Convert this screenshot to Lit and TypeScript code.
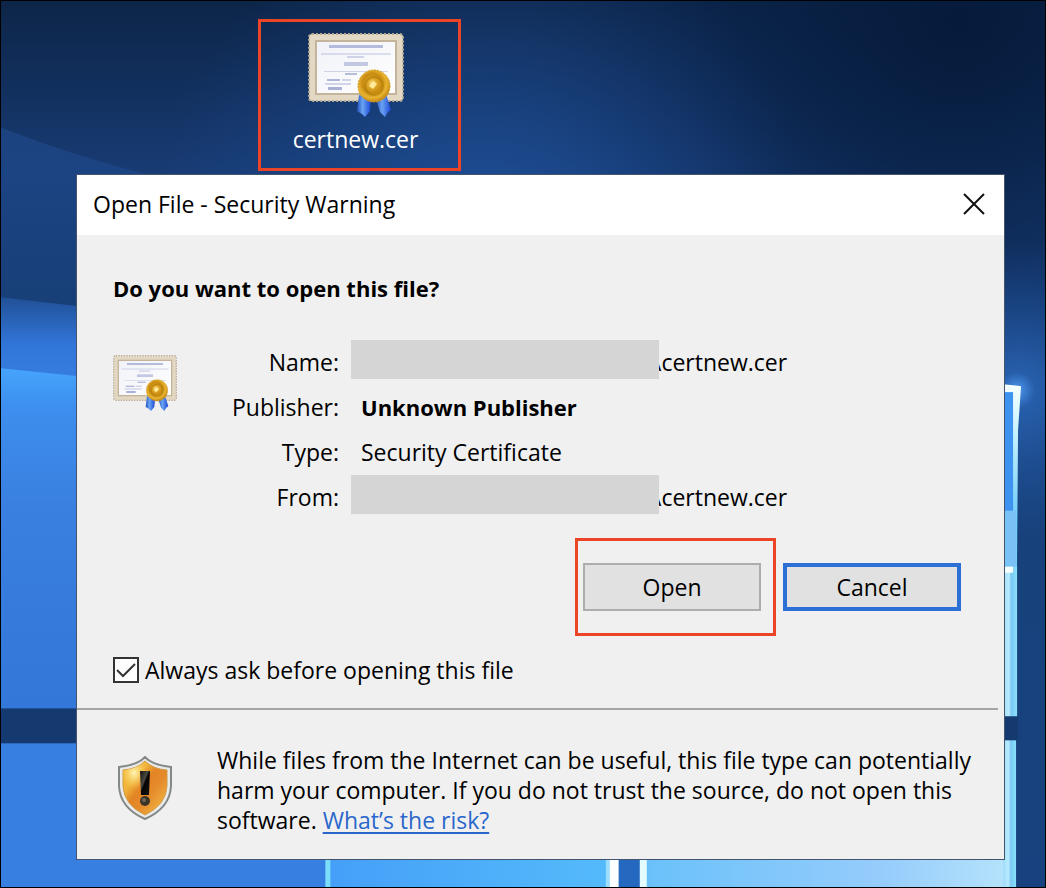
import { LitElement, html, css, svg } from "lit";
import { customElement, property, state } from "lit/decorators.js";

@customElement("desktop-wallpaper")
class DesktopWallpaper extends LitElement {
  static styles = css`
    :host { display: block; }
    .art { display: block; width: 100%; height: 100%; }
  `;

  render() {
    return html`
      <svg class="art" viewBox="0 0 1046 888" preserveAspectRatio="none" aria-hidden="true">
        <defs>
          <linearGradient id="sky" x1="0" y1="0" x2="0" y2="1">
            <stop offset="0" stop-color="#0d2548" />
            <stop offset=".1" stop-color="#12305e" />
            <stop offset=".2" stop-color="#183c75" />
            <stop offset=".4" stop-color="#184179" />
            <stop offset="1" stop-color="#17427f" />
          </linearGradient>
          <radialGradient id="dark" gradientUnits="userSpaceOnUse" cx="960" cy="20" r="430">
            <stop offset="0" stop-color="#061b3b" />
            <stop offset=".35" stop-color="#071e41" stop-opacity=".75" />
            <stop offset="1" stop-color="#0a2450" stop-opacity="0" />
          </radialGradient>
          <radialGradient id="glow" gradientUnits="userSpaceOnUse" cx="480" cy="235" r="330">
            <stop offset="0" stop-color="#2055a2" stop-opacity=".75" />
            <stop offset="1" stop-color="#1d4c94" stop-opacity="0" />
          </radialGradient>
          <linearGradient id="left" x1="0" y1="0" x2="0" y2="1">
            <stop offset="0" stop-color="#215096" />
            <stop offset=".45" stop-color="#3175d8" />
            <stop offset="1" stop-color="#3a82e3" />
          </linearGradient>
          <linearGradient id="beam" x1="0" y1="0" x2="0" y2="1">
            <stop offset="0" stop-color="#46a4fb" />
            <stop offset=".12" stop-color="#3d8eee" />
            <stop offset=".4" stop-color="#3a80e0" />
            <stop offset="1" stop-color="#3377d9" />
          </linearGradient>
          <linearGradient id="ray" x1="0" y1="0" x2="0" y2="1">
            <stop offset="0" stop-color="#2859a5" stop-opacity=".4" />
            <stop offset="1" stop-color="#2055a2" stop-opacity="0" />
          </linearGradient>
          <radialGradient id="flare" gradientUnits="userSpaceOnUse" cx="1018" cy="390" r="150">
            <stop offset="0" stop-color="#4f9af2" />
            <stop offset=".12" stop-color="#2b66b8" stop-opacity=".8" />
            <stop offset="1" stop-color="#1c4f9a" stop-opacity="0" />
          </radialGradient>
          <linearGradient id="paneA" x1="0" y1="0" x2="1" y2="0">
            <stop offset="0" stop-color="#459ff8" />
            <stop offset="1" stop-color="#55bbfb" />
          </linearGradient>
          <linearGradient id="paneB" x1="0" y1="0" x2="1" y2="0">
            <stop offset="0" stop-color="#69c1fa" />
            <stop offset=".65" stop-color="#95ccfc" />
            <stop offset="1" stop-color="#b5e3fb" />
          </linearGradient>
          <linearGradient id="edge" x1="0" y1="0" x2="1" y2="0">
            <stop offset="0" stop-color="#9fdcfb" />
            <stop offset=".4" stop-color="#b9ebfd" />
            <stop offset=".6" stop-color="#7cc9f5" />
            <stop offset="1" stop-color="#88e2fb" />
          </linearGradient>
          <linearGradient id="frame" x1="0" y1="0" x2="0" y2="1">
            <stop offset="0" stop-color="#f6ffff" />
            <stop offset=".15" stop-color="#c5f2ff" />
            <stop offset=".4" stop-color="#70cdf8" />
            <stop offset="1" stop-color="#70cdf8" />
          </linearGradient>
        </defs>
        <rect width="1046" height="888" fill="url(#sky)" />
        <rect width="1046" height="888" fill="url(#dark)" />
        <rect width="1046" height="450" fill="url(#glow)" />
        <path d="M0 127Q80 158 170 180H77V300H0Z" fill="url(#ray)" />
        <path d="M0 297L78 306V400H0Z" fill="url(#left)" />
        <path d="M0 368L78 376V710H0Z" fill="url(#beam)" />
        <rect y="709" width="78" height="35" fill="#153a70" />
        <rect y="744" width="330" height="144" fill="#377fe1" />
        <rect x="327" y="850" width="288" height="38" fill="url(#paneA)" />
        <rect x="325" y="850" width="5" height="38" fill="#7cdcfc" />
        <rect x="606" y="850" width="6" height="38" fill="#9cdcfd" />
        <rect x="610" y="850" width="9" height="38" fill="#fbffff" />
        <rect x="619" y="850" width="22" height="38" fill="#2468c0" />
        <rect x="642" y="850" width="368" height="38" fill="url(#paneB)" />
        <rect x="640" y="850" width="7" height="38" fill="#e4fbff" />
        <rect x="900" y="220" width="146" height="340" fill="url(#flare)" />
        <path d="M1004 332L1004 385H1022L1019 430L1018 560V717H1004Z" fill="none" />
        <path d="M1004 332" fill="none" />
        <path d="M1004 384L1022 386L1019 430L1018 560V717H1004Z" fill="url(#frame)" />
        <rect x="1004" y="392" width="10" height="119" fill="#3f93f0" />
        <rect x="1004" y="511" width="13" height="60" fill="#79c2f5" />
        <rect x="1004" y="567" width="14" height="150" fill="url(#edge)" />
        <rect x="1004" y="567" width="10" height="6" fill="#f5ffff" />
        <rect x="1004" y="717" width="15" height="24" fill="#143a70" />
        <rect x="1004" y="741" width="13" height="147" fill="url(#edge)" />
      </svg>
    `;
  }
}

@customElement("certificate-icon")
class CertificateIcon extends LitElement {
  static styles = css`
    :host { display: block; }
    .art { display: block; width: 100%; height: auto; }
  `;

  render() {
    return html`
      <svg class="art" viewBox="0 0 96 85" aria-hidden="true">
        <defs>
          <linearGradient id="paper" x1="0" y1="0" x2="1" y2="1">
            <stop offset="0" stop-color="#f1f2f8" />
            <stop offset="1" stop-color="#ffffff" />
          </linearGradient>
          <radialGradient id="gold" cx=".45" cy=".42" r=".6">
            <stop offset="0" stop-color="#ffe78a" />
            <stop offset=".25" stop-color="#dda526" />
            <stop offset=".5" stop-color="#c78a10" />
            <stop offset=".75" stop-color="#e9b430" />
            <stop offset="1" stop-color="#bd8210" />
          </radialGradient>
          <linearGradient id="ribbon" x1="0" y1="0" x2="1" y2="0">
            <stop offset="0" stop-color="#2450c0" />
            <stop offset=".4" stop-color="#6aa4f2" />
            <stop offset="1" stop-color="#1c45d8" />
          </linearGradient>
        </defs>
        <rect x="1" y="1" width="94" height="67" rx="3" fill="#e3d8c4" />
        <rect x="1" y="1" width="94" height="67" rx="3" fill="none" stroke="#b8aa92" stroke-width="2" stroke-dasharray="2 2" />
        <rect x="7" y="7" width="82" height="55" fill="#c4b49b" />
        <rect x="9" y="9" width="78" height="51" fill="url(#paper)" />
        <g fill="#7480bd">
          <rect x="21" y="12" width="54" height="3" opacity=".5" />
          <rect x="13" y="20" width="70" height="2" opacity=".22" />
          <rect x="39" y="23" width="17" height="2" opacity=".3" />
          <rect x="36" y="29" width="24" height="4" opacity=".4" />
          <rect x="16" y="38" width="64" height="1" opacity=".3" />
          <rect x="37" y="40" width="12" height="2" opacity=".5" />
          <rect x="19" y="46" width="13" height="2" opacity=".55" />
          <rect x="34" y="46" width="9" height="2" opacity=".3" />
          <rect x="17" y="50" width="26" height="2" opacity=".3" />
          <rect x="20" y="54" width="14" height="3" opacity=".6" />
        </g>
        <path d="M51 62L49 78L54 81L57 84L62 78L63 66Z" fill="url(#ribbon)" />
        <path d="M68 66L72 79L77 84L80 79L83 77L78 61Z" fill="url(#ribbon)" />
        <circle cx="66" cy="53" r="16" fill="url(#gold)" stroke="#cf9a22" stroke-dasharray="2 1" />
        <circle cx="66" cy="53" r="9" fill="none" stroke="#a87508" stroke-width="2" opacity=".5" />
        <path d="M61 53L65 48L69 51L65 56Z" fill="#ffe99a" />
      </svg>
    `;
  }
}

@customElement("shield-icon")
class ShieldIcon extends LitElement {
  static styles = css`
    :host { display: block; }
    .art { display: block; width: 100%; height: auto; }
  `;

  render() {
    return html`
      <svg class="art" viewBox="0 0 54 64" aria-hidden="true">
        <defs>
          <linearGradient id="amber" x1="0" y1="0" x2="1" y2="1">
            <stop offset="0" stop-color="#f3bb2e" />
            <stop offset=".3" stop-color="#f0b43c" />
            <stop offset=".45" stop-color="#e38425" />
            <stop offset=".62" stop-color="#e58b2c" />
            <stop offset="1" stop-color="#f6c649" />
          </linearGradient>
          <radialGradient id="shine" cx=".25" cy=".22" r=".3">
            <stop offset="0" stop-color="#fff6b8" />
            <stop offset="1" stop-color="#fbd25c" stop-opacity="0" />
          </radialGradient>
          <linearGradient id="ink" x1="0" y1="0" x2="1" y2="1">
            <stop offset="0" stop-color="#111111" />
            <stop offset=".4" stop-color="#4a4a42" />
            <stop offset=".5" stop-color="#050505" />
            <stop offset="1" stop-color="#151515" />
          </linearGradient>
        </defs>
        <path d="M27 1Q34 9 53 11V30Q52 52 27 63Q2 52 1 30V11Q20 9 27 1Z" fill="#e9ebeb" stroke="#858888" stroke-width="2" />
        <path d="M27 5Q35 13 49 14V30Q48 49 27 59Q6 49 5 30V14Q19 13 27 5Z" fill="url(#amber)" stroke="#cf9a45" />
        <path d="M27 5Q35 13 49 14V30Q48 49 27 59Q6 49 5 30V14Q19 13 27 5Z" fill="url(#shine)" />
        <path d="M22 15H32L31 39H23Z" fill="url(#ink)" />
        <circle cx="27" cy="45" r="5" fill="#3b3427" />
        <circle cx="26" cy="44" r="2" fill="#6d6860" />
      </svg>
    `;
  }
}

@customElement("security-dialog")
class SecurityDialog extends LitElement {
  @property() file = "certnew.cer";
  @state() private ask = true;

  static styles = css`
    :host { display: block; }
    * { box-sizing: border-box; }
    .window {
      background: #f0f0f0;
      border: 1px solid #44546a;
      color: #000;
      font-size: 23px;
      line-height: 30px;
    }
    .titlebar {
      display: flex;
      align-items: center;
      justify-content: space-between;
      height: 60px;
      padding: 0 16px 2px;
      background: #fff;
    }
    .title { margin: 0; font-size: 23px; font-weight: 400; }
    .close {
      display: grid;
      place-items: center;
      width: 28px;
      height: 28px;
      padding: 0;
      border: 0;
      background: none;
    }
    .cross { width: 22px; height: 22px; }
    .body { padding: 38px 36px 23px; }
    .question { margin: 0; font-size: 22px; font-weight: 700; }
    .details { display: flex; margin-top: 37px; }
    .fileicon { flex: none; width: 64px; margin-top: 15px; }
    .facts {
      flex: 1;
      display: grid;
      grid-template-columns: 162px 1fr;
      grid-auto-rows: 45px;
      column-gap: 12px;
      margin: 0;
    }
    .term { text-align: right; line-height: 45px; }
    .value { margin: 0; padding-left: 10px; line-height: 45px; }
    .path { display: flex; padding-left: 0; }
    .mask { position: relative; width: 308px; height: 39px; background: #d5d5d5; }
    .name { margin-left: -6px; }
    .strong { font-size: 22px; font-weight: 700; }
    .actions { display: flex; justify-content: flex-end; align-items: center; gap: 7px; margin: 18px 7px 0 0; }
    .mark { padding: 22px 12px 22px 5px; border: 3px solid #ec4427; }
    .btn {
      display: block;
      width: 178px;
      height: 48px;
      padding: 0;
      border: 2px solid #adadad;
      background: #e1e1e1;
      color: #000;
      font: inherit;
    }
    .default { border: 4px solid #2c70d6; }
    .ask { display: flex; align-items: center; gap: 6px; margin-top: 19px; }
    .tick { display: grid; width: 26px; height: 26px; }
    .box, .check { grid-area: 1 / 1; width: 26px; height: 26px; margin: 0; }
    .box { appearance: none; border: 2px solid #333; background: #fff; }
    .check { pointer-events: none; }
    .rule { height: 2px; margin: 0 6px 0 0; border: 0; background: #a5a5a5; }
    .footer { display: flex; gap: 45px; padding: 35px 24px 24px 41px; }
    .shield { flex: none; width: 54px; margin-top: 11px; }
    .advice { margin: 0; }
    .link { color: #2a67cc; text-decoration-thickness: 2px; text-underline-offset: 3px; }
  `;

  private path() {
    return html`<dd class="value path"><span class="mask"></span><span class="name">\\${this.file}</span></dd>`;
  }

  render() {
    return html`
      <section class="window" role="dialog" aria-labelledby="title">
        <header class="titlebar">
          <h1 class="title" id="title">Open File - Security Warning</h1>
          <button class="close" aria-label="Close">
            <svg class="cross" viewBox="0 0 22 22" fill="none" stroke="#111" stroke-width="2">
              <path d="M1 1L21 21M21 1L1 21" />
            </svg>
          </button>
        </header>
        <div class="body">
          <h2 class="question">Do you want to open this file?</h2>
          <div class="details">
            <certificate-icon class="fileicon"></certificate-icon>
            <dl class="facts">
              <dt class="term">Name:</dt>
              ${this.path()}
              <dt class="term">Publisher:</dt>
              <dd class="value strong">Unknown Publisher</dd>
              <dt class="term">Type:</dt>
              <dd class="value">Security Certificate</dd>
              <dt class="term">From:</dt>
              ${this.path()}
            </dl>
          </div>
          <div class="actions">
            <div class="mark"><button class="btn">Open</button></div>
            <button class="btn default">Cancel</button>
          </div>
          <label class="ask">
            <span class="tick">
              <input class="box" type="checkbox" .checked=${this.ask}
                @change=${(e: Event) => (this.ask = (e.target as HTMLInputElement).checked)} />
              <svg class="check" viewBox="0 0 26 26" fill="none" stroke="#333" stroke-width="2">
                ${this.ask ? svg`<path d="M4 13L10 19L22 7" />` : null}
              </svg>
            </span>
            Always ask before opening this file
          </label>
        </div>
        <hr class="rule" />
        <footer class="footer">
          <shield-icon class="shield"></shield-icon>
          <p class="advice">
            While files from the Internet can be useful, this file type can potentially harm your
            computer. If you do not trust the source, do not open this software.
            <a class="link" href="#risk">What’s the risk?</a>
          </p>
        </footer>
      </section>
    `;
  }
}

@customElement("app-root")
class AppRoot extends LitElement {
  static styles = css`
    :host { display: block; font-family: "Open Sans", "Noto Sans", sans-serif; }
    * { box-sizing: border-box; }
    .desktop {
      position: relative;
      min-height: 100vh;
      padding: 18px 40px 27px 75px;
      border: 1px solid #000;
      overflow: hidden;
    }
    .wallpaper { position: absolute; inset: 0; }
    .content { position: relative; }
    .shortcut {
      display: flex;
      flex-direction: column;
      align-items: center;
      gap: 6px;
      width: 203px;
      height: 152px;
      margin: 0 0 3px 182px;
      padding: 11px 8px 0 0;
      border: 3px solid #ec4427;
      color: #fff;
      font-size: 23px;
      line-height: 30px;
    }
    .icon { width: 96px; }
  `;

  render() {
    return html`
      <main class="desktop">
        <desktop-wallpaper class="wallpaper"></desktop-wallpaper>
        <div class="content">
          <div class="shortcut">
            <certificate-icon class="icon"></certificate-icon>
            <span>certnew.cer</span>
          </div>
          <security-dialog></security-dialog>
        </div>
      </main>
    `;
  }
}
